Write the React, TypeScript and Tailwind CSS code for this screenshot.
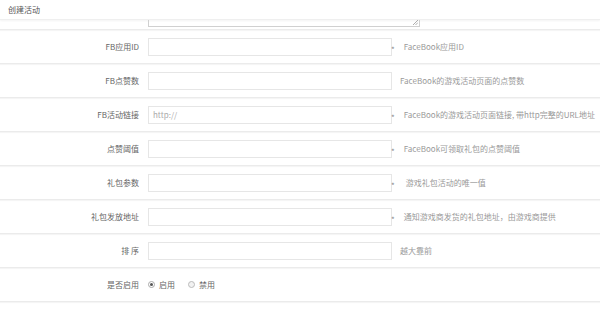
const font = { fontFamily: '"Noto Sans CJK SC", "Liberation Sans", sans-serif' };

type Field = {
  label: string;
  placeholder?: string;
  star?: boolean;
  hint: string;
  hintPad?: string;
};

const fields: Field[] = [
  { label: 'FB应用ID', star: true, hint: 'FaceBook应用ID' },
  { label: 'FB点赞数', hint: 'FaceBook的游戏活动页面的点赞数' },
  { label: 'FB活动链接', placeholder: 'http://', star: true, hint: 'FaceBook的游戏活动页面链接, 带http完整的URL地址' },
  { label: '点赞阈值', star: true, hint: 'FaceBook可领取礼包的点赞阈值' },
  { label: '礼包参数', star: true, hint: '游戏礼包活动的唯一值', hintPad: 'ml-[11px]' },
  { label: '礼包发放地址', star: true, hint: '通知游戏商发货的礼包地址，由游戏商提供' },
  { label: '排 序', hint: '越大靠前' },
];

function Row({ children }: { children: React.ReactNode }) {
  return (
    <div className="flex h-[34px] items-center border-b border-[#ebebeb] shadow-[0_1px_1px_#f5f5f5]">
      {children}
    </div>
  );
}

export default function App() {
  return (
    <div className="w-[600px] h-[324px] bg-white overflow-hidden text-[8px] text-[#666]" style={font}>
      <div className="flex h-[20px] items-center px-[8px] text-[#555] border-b border-[#efefef] shadow-[0_1px_2px_#f3f3f3]">
        创建活动
      </div>

      <div className="flex h-[10px] border-b border-[#ebebeb] shadow-[0_1px_1px_#f5f5f5]">
        <div className="ml-[148px] relative w-[272px] h-[7px] border-l border-r border-b border-[#d0d0d0]">
          <svg className="absolute right-[1px] bottom-[1px]" width="5" height="5" viewBox="0 0 5 5">
            <path d="M5 0 L0 5 M5 2.5 L2.5 5" stroke="#999" strokeWidth="0.8" />
          </svg>
        </div>
      </div>

      {fields.map((f) => (
        <Row key={f.label}>
          <div className="w-[139px] text-right">{f.label}</div>
          <div className="ml-[9px] flex h-[18px] w-[244px] items-center border border-[#e6e6e6] px-[4px] text-[#aaa]">
            {f.placeholder}
          </div>
          {f.star ? (
            <>
              <span className="ml-[-1px] translate-y-[3px] text-[#888]">*</span>
              <span className={`${f.hintPad ?? 'ml-[9px]'} text-[#999]`}>{f.hint}</span>
            </>
          ) : (
            <span className="ml-[8px] text-[#999]">{f.hint}</span>
          )}
        </Row>
      ))}

      <Row>
        <div className="w-[139px] text-right">是否启用</div>
        <label className="ml-[9px] flex items-center gap-[4px]">
          <span className="flex h-[7px] w-[7px] items-center justify-center rounded-full border border-[#aaa] bg-white">
            <span className="h-[3px] w-[3px] rounded-full bg-[#555]" />
          </span>
          启用
        </label>
        <label className="ml-[13px] flex items-center gap-[4px]">
          <span className="h-[7px] w-[7px] rounded-full border border-[#bbb] bg-[#f2f2f2]" />
          禁用
        </label>
      </Row>
    </div>
  );
}
